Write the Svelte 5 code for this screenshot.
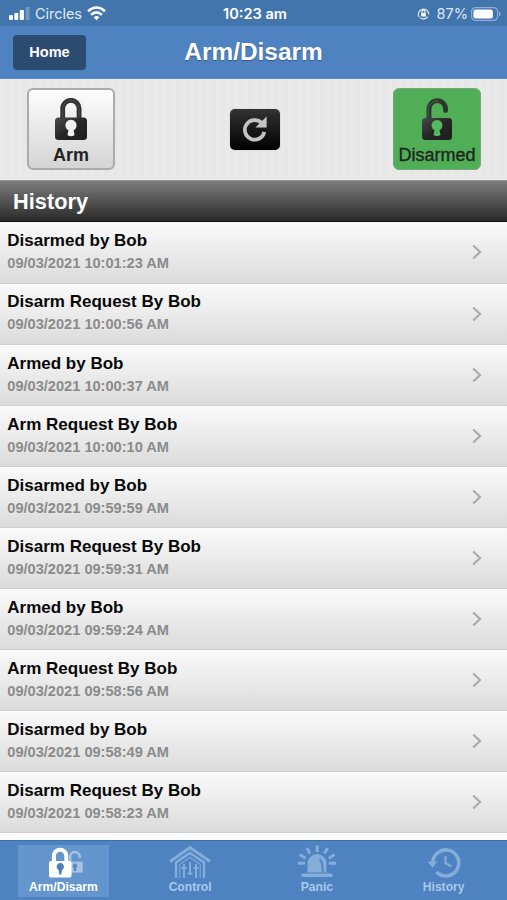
<script>
  const history = [
    { title: 'Disarmed by Bob', time: '09/03/2021 10:01:23 AM' },
    { title: 'Disarm Request By Bob', time: '09/03/2021 10:00:56 AM' },
    { title: 'Armed by Bob', time: '09/03/2021 10:00:37 AM' },
    { title: 'Arm Request By Bob', time: '09/03/2021 10:00:10 AM' },
    { title: 'Disarmed by Bob', time: '09/03/2021 09:59:59 AM' },
    { title: 'Disarm Request By Bob', time: '09/03/2021 09:59:31 AM' },
    { title: 'Armed by Bob', time: '09/03/2021 09:59:24 AM' },
    { title: 'Arm Request By Bob', time: '09/03/2021 09:58:56 AM' },
    { title: 'Disarmed by Bob', time: '09/03/2021 09:58:49 AM' },
    { title: 'Disarm Request By Bob', time: '09/03/2021 09:58:23 AM' }
  ];

  const tabs = ['Arm/Disarm', 'Control', 'Panic', 'History'];
  let active = $state('Arm/Disarm');
</script>

<div class="screen">
  <div class="status">
    <div class="status-left">
      <svg class="signal" width="21" height="13" viewBox="0 0 21 13" fill="#fff">
        <rect x="0" y="8" width="4" height="5" rx="1" />
        <rect x="5.3" y="6" width="4" height="7" rx="1" />
        <rect x="10.8" y="3" width="4.2" height="10" rx="1" />
        <rect x="16.6" y="0" width="4" height="13" rx="1" opacity=".25" />
      </svg>
      <span class="carrier">Circles</span>
      <svg width="19" height="15" viewBox="0 0 19 15" fill="none" stroke="#fff" stroke-width="2.5">
        <path d="M1 5.2 Q9.5 -2.2 18 5.2" />
        <path d="M4.1 8.7 Q9.5 4 14.9 8.7" />
        <path d="M6.6 11.2 Q9.5 8.8 12.4 11.2 L9.5 14.2Z" fill="#fff" stroke="none" />
      </svg>
    </div>
    <div class="clock">10:23 am</div>
    <div class="status-right">
      <svg width="13" height="13" viewBox="0 0 13 13" fill="none" stroke="#e4edf7" stroke-width="1.2">
        <path d="M2 10 A5.2 5.2 0 1 1 11.7 7.4 M10.6 9.6 A5.2 5.2 0 0 1 2.8 10.6" />
        <rect x="4.2" y="5.9" width="4.6" height="3.6" rx=".6" fill="#fff" stroke="none" />
        <path d="M5 6V4.9a1.5 1.5 0 0 1 3 0V6" />
      </svg>
      <span class="percent">87%</span>
      <svg width="30" height="14" viewBox="0 0 30 14">
        <rect x=".6" y=".6" width="26" height="12.8" rx="4" fill="none" stroke="#8fb0d6" stroke-width="1.2" />
        <rect x="2.4" y="2.4" width="19.5" height="9.2" rx="2.4" fill="#fff" />
        <path d="M28 4.6q1.6 .8 1.6 2.4t-1.6 2.4z" fill="#8fb0d6" />
      </svg>
    </div>
  </div>

  <header>
    <button class="home">Home</button>
    <h1>Arm/Disarm</h1>
  </header>

  <div class="controls">
    <button class="mode">
      <svg width="32" height="42" viewBox="0 0 32 42">
        <defs>
          <linearGradient id="metal" x1="0" y1="0" x2="1" y2="1">
            <stop offset="0" stop-color="#4a4a4a" />
            <stop offset=".5" stop-color="#262626" />
            <stop offset="1" stop-color="#1c1c1c" />
          </linearGradient>
        </defs>
        <path d="M7.7 22V10.5a8.2 8.2 0 0 1 16.4 0V22" fill="none" stroke="#303030" stroke-width="4.8" />
        <path d="M7.7 20V10.5a8.2 8.2 0 0 1 16.4 0V20" fill="none" stroke="#505050" stroke-width="1" />
        <rect x="0" y="19.5" width="32" height="22.5" rx="3.5" fill="url(#metal)" />
        <path d="M13.4 32.3a5.6 5.6 0 1 1 5.2 0l1 4.7q-3.6 2.5-7.2 0z" fill="#f0f0f0" />
      </svg>
      <span class="arm-label">Arm</span>
    </button>

    <button class="refresh" aria-label="Refresh">
      <svg width="26" height="26" viewBox="0 0 26 26">
        <path d="M19.5 6.8A9.8 9.8 0 1 0 22.3 15.8" fill="none" stroke="#c3c3c3" stroke-width="3.7" />
        <path d="M24.6 .4V11.5H13.4z" fill="#c3c3c3" />
      </svg>
    </button>

    <button class="mode on">
      <svg width="32" height="42" viewBox="0 0 32 42">
        <path d="M8 21V11a8.3 8.3 0 0 1 16.6 0V12.5" fill="none" stroke="#2c382d" stroke-width="4.8" stroke-linecap="round" />
        <path d="M7.2 19V10.5a9 9 0 0 1 10-7.5" fill="none" stroke="#4f6352" stroke-width="1" />
        <rect x="1" y="20" width="30" height="22" rx="3.5" fill="url(#metal)" />
        <path d="M13.5 32.3a5.5 5.5 0 1 1 5 0l1 4.7q-3.5 2.3-7 0z" fill="#53ba61" />
      </svg>
      <span class="disarm-label">Disarmed</span>
    </button>
  </div>

  <h2>History</h2>

  <ul class="history">
    {#each history as item}
      <li>
        <div>
          <div class="event">{item.title}</div>
          <div class="time">{item.time}</div>
        </div>
        <svg width="10" height="16" viewBox="0 0 10 16" fill="none" stroke="#ababab" stroke-width="2.2">
          <path d="M1.2 1.5 8 8 1.2 14.5" />
        </svg>
      </li>
    {/each}
  </ul>

  <nav>
    {#each tabs as tab}
      <button class="tab" class:active={active === tab} onclick={() => (active = tab)}>
        {#if tab === 'Arm/Disarm'}
          <svg width="44" height="34" viewBox="1.3 .4 44 34">
            <g opacity=".42">
              <path d="M30.5 17V12.5a4.8 4.8 0 0 1 9.6-.5v1.5" fill="none" stroke="#fff" stroke-width="2.4" />
              <path d="M29 17H43V28H29z" fill="#fff" />
            </g>
            <path d="M35.3 19a2.4 2.4 0 0 1 1.2 4.4v3h-2.4v-3a2.4 2.4 0 0 1 1.2-4.4z" fill="#5588c1" />
            <path d="M14.2 18V11.3a6.2 6.2 0 0 1 12.4 0V18" fill="none" stroke="#fff" stroke-width="4" />
            <rect x="9.3" y="16.5" width="22.5" height="16.5" rx="1.8" fill="#fff" />
            <path d="M18.9 25.5a3.7 3.7 0 1 1 3.4 0L21.6 30h-2z" fill="#4a80bc" />
          </svg>
        {:else if tab === 'Control'}
          <svg width="42" height="34" viewBox="0 0 42 34" fill="none" stroke="#84add9" stroke-width="2">
            <path d="M1 16.5 21 2.5 41 16.5" stroke-width="3" />
            <path d="M7 33V17.5L21 8 35 17.5V33" stroke-width="2.4" />
            <path d="M10.8 33V19.5L21 12.5 31.2 19.5V33" stroke-width="1.1" />
            <path d="M15 19V33M21 17V30M27 19V33M12.5 23h5M18.5 28.5h5M24.5 23h5" />
          </svg>
        {:else if tab === 'Panic'}
          <svg width="40" height="34" viewBox="0 0 40 34">
            <g stroke="#84add9" stroke-width="2.9" fill="none">
              <path d="M20.2 .5V7M9.8 3 13 8.5M30.6 3 27.4 8.5M2.8 9.5 8.6 13.2M37.6 9.5 31.8 13.2M.8 18.3H8M32 18.3H39.2" />
            </g>
            <path d="M10.5 27.5V18a9.5 9 0 0 1 19 0V27.5z" fill="#84add9" />
            <path d="M22.5 14q3.3 2 3.2 13.5" fill="none" stroke="#4e82c1" stroke-width="1.8" />
            <rect x="4.5" y="28.5" width="31" height="3.5" rx="1" fill="#84add9" />
          </svg>
        {:else}
          <svg width="34" height="34" viewBox="0 0 34 34" fill="none" stroke="#84add9" stroke-width="3.6">
            <path d="M5.8 18A13 13 0 1 1 9.4 26.9" />
            <path d="M.6 16.5h9.8L5.5 22.8z" fill="#84add9" stroke="none" />
            <path d="M18.5 11V18L24.5 21.5" stroke-width="2.2" />
          </svg>
        {/if}
        <span>{tab}</span>
      </button>
    {/each}
  </nav>
</div>

<style>
  :global(body) {
    margin: 0;
  }

  .screen {
    display: flex;
    flex-direction: column;
    width: 507px;
    height: 900px;
    overflow: hidden;
    background: #fafafa;
    font-family: 'Liberation Sans', Arial, sans-serif;
  }

  button {
    border: none;
    padding: 0;
    font-family: inherit;
    cursor: pointer;
  }

  svg {
    display: block;
    flex: none;
  }

  .status {
    display: grid;
    grid-template-columns: 1fr auto 1fr;
    align-items: center;
    box-sizing: border-box;
    height: 26px;
    padding: 1px 6px 0 9px;
    background: #4375ad;
    color: #fff;
    font-family: Inter, sans-serif;
    font-size: 14.5px;
  }

  .status-left,
  .status-right {
    display: flex;
    align-items: center;
  }

  .carrier {
    margin: 0 5px 0 5px;
    color: #dfe9f4;
    font-size: 14.4px;
  }

  .clock {
    font-weight: 600;
    font-size: 14.6px;
  }

  .status-right {
    justify-content: flex-end;
    color: #dfe9f4;
  }

  .percent {
    margin: 0 3px 0 7px;
  }

  header {
    display: grid;
    grid-template-columns: 73px 1fr 73px;
    align-items: center;
    box-sizing: border-box;
    height: 53px;
    padding: 0 13px;
    background: #4e82c1;
    border-bottom: 1px solid #5e8ec4;
  }

  .home {
    height: 35px;
    border-radius: 4px;
    background: #2b4c70;
    color: #fff;
    font-size: 14.5px;
    font-weight: bold;
  }

  h1 {
    margin: 0;
    color: #fff;
    font-size: 24.4px;
    line-height: 28px;
    text-align: center;
    text-shadow: 0 1px 1px #365b87;
  }

  .controls {
    display: flex;
    align-items: center;
    justify-content: space-between;
    box-sizing: border-box;
    height: 101px;
    padding: 0 26px 1px 27px;
    background: repeating-linear-gradient(90deg, #e9e9e9 0 5px, #e7e7e7 5px 9px);
  }

  .mode {
    display: flex;
    flex-direction: column;
    align-items: center;
    box-sizing: border-box;
    width: 88px;
    height: 82px;
    padding-top: 8px;
    border: 2px solid #ababab;
    border-radius: 6px;
    background: linear-gradient(#fdfdfd, #d4d4d4);
    color: #232323;
    font-size: 18px;
    line-height: 22px;
  }

  .mode.on {
    border: 1px solid #79a57d;
    background: #50ae57;
    padding-top: 9px;
  }

  .mode span {
    margin-top: 4px;
  }

  .arm-label {
    font-weight: bold;
  }

  .disarm-label {
    -webkit-text-stroke: 0.35px #1c2a1e;
  }

  .refresh {
    display: flex;
    align-items: center;
    justify-content: center;
    width: 50px;
    height: 41px;
    margin-left: 1px;
    border-radius: 5px;
    background: linear-gradient(#333, #000);
    box-shadow: 0 0 1px #777;
  }

  h2 {
    box-sizing: border-box;
    height: 42px;
    margin: 0;
    padding-left: 13px;
    border-top: 1px solid #999;
    border-bottom: 1px solid #111;
    background: linear-gradient(#7c7c7c, #2a2a2a);
    color: #fff;
    font-size: 21.8px;
    line-height: 42px;
  }

  .history {
    flex: 1;
    margin: 0;
    padding: 0;
    list-style: none;
  }

  .history li {
    display: flex;
    align-items: center;
    justify-content: space-between;
    box-sizing: border-box;
    height: 61.1px;
    padding: 0 25px 0 7.3px;
    border-bottom: 1px solid #cfcfcf;
    background: linear-gradient(#fafafa, #dbdbdb);
  }

  .history li:first-child {
    height: 61.5px;
  }

  .event {
    margin-top: -1.2px;
    color: #080808;
    font-size: 17px;
    font-weight: bold;
    line-height: 23px;
  }

  .time {
    color: #8b8b8b;
    font-size: 14.6px;
    font-weight: bold;
    line-height: 22px;
  }

  nav {
    display: flex;
    justify-content: space-around;
    box-sizing: border-box;
    height: 60px;
    padding-top: 4px;
    border-top: 1px solid #3b72b0;
    background: #4e82c1;
  }

  .tab {
    display: flex;
    flex-direction: column;
    align-items: center;
    width: 91px;
    height: 52px;
    background: none;
    color: #a9c8ea;
    font-size: 12.1px;
    font-weight: bold;
    line-height: 15px;
  }

  .tab span {
    margin-top: 1px;
  }

  .tab.active {
    background: #6496cd;
    color: #fff;
  }
</style>
